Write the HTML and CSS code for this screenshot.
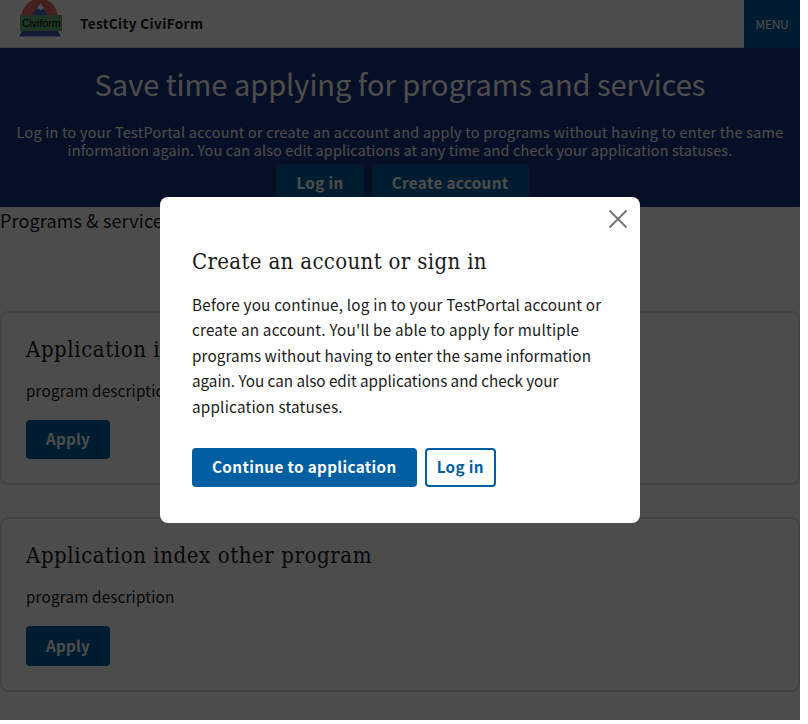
FILE: index.html
```html
<!DOCTYPE html>
<html lang="en">
<head>
<meta charset="utf-8">
<title>TestCity CiviForm</title>
<link rel="stylesheet" href="styles.css">
</head>
<body>
<div class="page">
  <header class="header">
    <svg class="logo" viewBox="0 0 44 40" aria-hidden="true">
      <path d="M2.500 15C5 4 12-1 21-1s15 5 18 16z" fill="#e86a66"/>
      <path d="M13 15 21.500 3 28 15z" fill="#4462b4"/>
      <path d="m17 9.500 4.500-6.500 4.500 6.500-2-1-2.300 2-2.200-2z" fill="#fff"/>
      <g fill="#fff" opacity=".6"><circle cx="10" cy="8" r=".6"/><circle cx="14" cy="4" r=".6"/><circle cx="28" cy="3.500" r=".6"/><circle cx="33" cy="8" r=".6"/><circle cx="8" cy="12" r=".6"/><circle cx="35" cy="12" r=".6"/></g>
      <path d="M3 31h36l3 5.500H0z" fill="#4c5cae"/>
      <path d="M1 15h42v16H1z" fill="#68ae7c"/>
      <text class="logo-text" x="22.200" y="26.800" text-anchor="middle">Civiform</text>
    </svg>
    <span class="brand">TestCity CiviForm</span>
    <button class="menu">MENU</button>
  </header>
  <section class="hero">
    <h1>Save time applying for programs and services</h1>
    <p><span class="wide">Log in to your TestPortal account or create an account and apply to programs without having to enter the same</span><br>information again. You can also edit applications at any time and check your application statuses.</p>
    <div class="hero-actions">
      <button class="btn">Log in</button>
      <button class="btn">Create account</button>
    </div>
  </section>
  <main>
    <h2 class="section-title">Programs &amp; services</h2>
    <article class="card">
      <h3>Application index program</h3>
      <p>program description</p>
      <button class="btn btn-apply">Apply</button>
    </article>
    <article class="card card-last">
      <h3>Application index other program</h3>
      <p>program description</p>
      <button class="btn btn-apply">Apply</button>
    </article>
  </main>
  <div class="overlay">
    <div class="modal" role="dialog">
      <button class="close" aria-label="Close">
        <svg viewBox="0 0 20 20"><path d="m1.500 1.500 17 17m0-17-17 17"/></svg>
      </button>
      <h3>Create an account or sign in</h3>
      <p>Before you continue, log in to your TestPortal account or<br>create an account. You'll be able to apply for multiple<br><span class="snug">programs without having to enter the same information</span><br><span class="tight">again. You can also edit applications and check your</span><br>application statuses.</p>
      <div class="actions">
        <button class="btn">Continue to application</button>
        <button class="btn btn-outline">Log in</button>
      </div>
    </div>
  </div>
</div>
</body>
</html>
```
FILE: styles.css
```css
* { box-sizing: border-box; }
body { margin: 0; background: #fff; color: #1b1b1b; font-family: "Noto Sans CJK SC", "Noto Sans", sans-serif; font-size: 15.27px; }
h1, h2, h3, p { margin: 0; font-weight: 400; }
button { font-family: inherit; border: 0; padding: 0; white-space: nowrap; }
.page { position: relative; width: 800px; height: 720px; overflow: hidden; }
.header { display: flex; align-items: center; height: 48px; padding-left: 19px; border-bottom: 1px solid #dfe1e2; }
.logo { width: 44px; height: 40px; align-self: flex-start; }
.logo-text { font: 10.5px "Liberation Sans", sans-serif; fill: #000; }
.brand { margin: 0 0 1px 17px; font-size: 13.5px; font-weight: 700; line-height: 20px; letter-spacing: .4px; }
.menu { margin-left: auto; width: 56px; height: 48px; background: #005ea2; color: #fff; font-size: 12px; letter-spacing: -.3px; }
.hero { height: 159px; background: #1a3480; color: #fff; text-align: center; padding-top: 14px; }
.hero h1 { font-size: 29px; line-height: 42px; white-space: nowrap; letter-spacing: -.02px; }
.hero p { font-size: 14.4px; line-height: 18px; margin-top: 19px; white-space: nowrap; letter-spacing: .155px; }
.hero .wide { letter-spacing: .265px; }
.hero-actions { display: flex; justify-content: center; gap: 8px; margin: 5px 0 0 5px; }
.btn { height: 39px; padding: 0 20px 2px; border-radius: 4px; background: #005ea2; color: #fff; font-size: 15.27px; font-weight: 700; line-height: 20px; letter-spacing: .35px; }
.hero .btn { padding-bottom: 4px; }
.btn-apply { letter-spacing: .2px; padding-bottom: 3px; }
.section-title { font-size: 18px; line-height: 26px; height: 104px; letter-spacing: .15px; }
.card { height: 174px; border: 2px solid #dfe1e2; border-radius: 8px; padding: 23px 24px; margin-bottom: 32px; }
.card-last { height: 175px; }
.card-last .btn { height: 40px; }
.card h3, .modal h3 { font: 22px/28px "DejaVu Serif Condensed", "DejaVu Serif", serif; letter-spacing: .34px; }
.card h3 { letter-spacing: .58px; }
.card p { line-height: 26px; margin: 13px 0 17px; letter-spacing: .16px; }
.overlay { position: absolute; inset: 0; display: flex; justify-content: center; align-items: center; background: rgba(0, 0, 0, .7); }
.modal { position: relative; width: 480px; height: 326px; background: #fff; border-radius: 8px; padding: 51px 32px 0; }
.modal p { line-height: 25.5px; margin: 15.6px 0 28.9px; white-space: nowrap; letter-spacing: .2px; }
.modal .snug { letter-spacing: .08px; }
.modal .tight { letter-spacing: -.04px; }
.actions { display: flex; gap: 8px; }
.btn-outline { background: #fff; color: #005ea2; border: 2px solid #005ea2; padding: 0 10px 2px; }
.close { position: absolute; right: 12px; top: 12px; width: 20px; height: 20px; background: none; }
.close svg { display: block; stroke: #71767a; stroke-width: 2; fill: none; }
```
